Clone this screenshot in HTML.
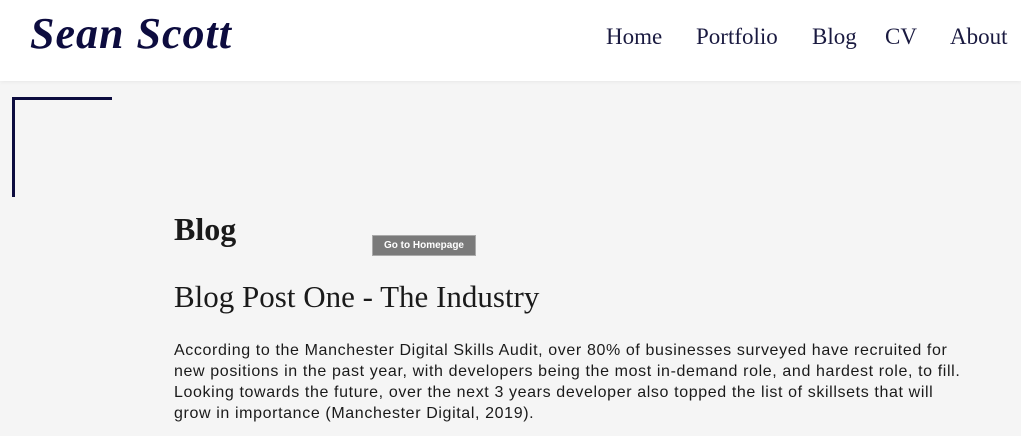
<!DOCTYPE html>
<html><head><style>
body{margin:0;width:1021px;height:436px;overflow:hidden;background:#f5f5f5;font-family:"Liberation Serif",serif;}
.hdr{position:absolute;left:0;top:0;width:1021px;height:81px;background:#fff;box-shadow:0 1px 4px rgba(0,0,0,.06);}
.logo{position:absolute;left:30px;top:8px;font:italic bold 44px "Liberation Serif",serif;color:#0d0c3f;letter-spacing:1px;}
.nav{position:absolute;top:24px;font-size:23px;color:#1a1a40;}
.br1{position:absolute;left:12px;top:97px;width:100px;height:3px;background:#0d0c3f;}
.br2{position:absolute;left:12px;top:97px;width:3px;height:100px;background:#0d0c3f;}
h1{position:absolute;left:174px;top:211px;margin:0;font-size:32px;font-weight:bold;color:#1a1a1a;}
h2{position:absolute;left:174px;top:279px;margin:0;font-size:31px;font-weight:normal;color:#1a1a1a;}
.tip{position:absolute;left:372px;top:235px;width:104px;height:21px;background:#7a7a7a;border:1px solid #aaa;box-sizing:border-box;color:#fff;font:bold 10px "Liberation Sans",sans-serif;line-height:19px;text-align:center;}
p{position:absolute;left:174px;top:340px;margin:0;font:16px/21px "Liberation Sans",sans-serif;letter-spacing:0.62px;color:#1a1a1a;white-space:nowrap;}
</style></head><body>
<div class="hdr">
<div class="logo">Sean Scott</div>
<span class="nav" style="left:606px">Home</span>
<span class="nav" style="left:696px">Portfolio</span>
<span class="nav" style="left:812px">Blog</span>
<span class="nav" style="left:885px">CV</span>
<span class="nav" style="left:950px">About</span>
</div>
<div class="br1"></div><div class="br2"></div>
<h1>Blog</h1>
<div class="tip">Go to Homepage</div>
<h2>Blog Post One - The Industry</h2>
<p>According to the Manchester Digital Skills Audit, over 80% of businesses surveyed have recruited for<br>new positions in the past year, with developers being the most in-demand role, and hardest role, to fill.<br>Looking towards the future, over the next 3 years developer also topped the list of skillsets that will<br>grow in importance (Manchester Digital, 2019).</p>
</body></html>
